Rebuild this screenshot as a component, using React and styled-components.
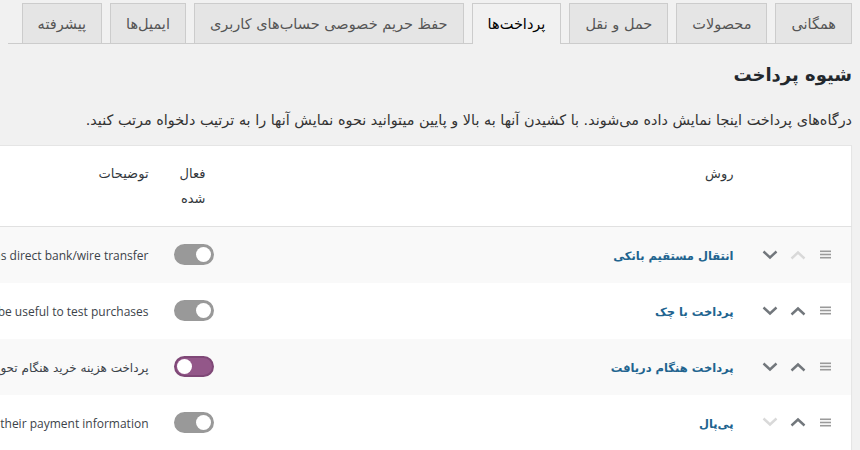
import styled, { createGlobalStyle } from "styled-components";

const GlobalStyle = createGlobalStyle`
  html, body {
    margin: 0;
    padding: 0;
    background: #f1f1f1;
  }
  body {
    direction: rtl;
    font-family: Tahoma, "DejaVu Sans", sans-serif;
    color: #444;
  }
`;

// rows of the payment gateways table
const gateways = [
  {
    name: "انتقال مستقیم بانکی",
    description: "Take payments in person via BACS. More commonly known as direct bank/wire transfer",
    enabled: false,
    canUp: false,
    canDown: true,
  },
  {
    name: "پرداخت با چک",
    description: "Take payments in person via checks. This offline gateway can also be useful to test purchases",
    enabled: false,
    canUp: true,
    canDown: true,
  },
  {
    name: "پرداخت هنگام دریافت",
    description: "پرداخت هزینه خرید هنگام تحویل سفارش",
    enabled: true,
    canUp: true,
    canDown: true,
    rtl: true,
  },
  {
    name: "پی‌پال",
    description: "PayPal Standard redirects customers to PayPal to enter their payment information",
    enabled: false,
    canUp: true,
    canDown: false,
  },
];

const tabs = [
  "همگانی",
  "محصولات",
  "حمل و نقل",
  "پرداخت‌ها",
  "حفظ حریم خصوصی حساب‌های کاربری",
  "ایمیل‌ها",
  "پیشرفته",
];

const Chevron = ({ up, disabled }) => (
  <ChevronIcon width="16" height="10" viewBox="0 0 16 10" $disabled={disabled}>
    <path
      d={up ? "M1.5 8.5 L8 2.5 L14.5 8.5" : "M1.5 1.5 L8 7.5 L14.5 1.5"}
      fill="none"
      stroke="currentColor"
      strokeWidth="2.4"
    />
  </ChevronIcon>
);

const Handle = () => (
  <HandleIcon width="11" height="9" viewBox="0 0 11 9">
    <rect x="0" y="0.5" width="11" height="1.6" fill="currentColor" />
    <rect x="0" y="3.7" width="11" height="1.6" fill="currentColor" />
    <rect x="0" y="6.9" width="11" height="1.6" fill="currentColor" />
  </HandleIcon>
);

const App = () => {
  return (
    <>
      <GlobalStyle />
      <Page>
        <TabBar>
          {tabs.map((tab) => (
            <Tab key={tab} $active={tab === "پرداخت‌ها"}>
              {tab}
            </Tab>
          ))}
        </TabBar>

        <Heading>شیوه پرداخت</Heading>
        <Intro>
          درگاه‌های پرداخت اینجا نمایش داده می‌شوند. با کشیدن آنها به بالا و پایین میتوانید نحوه نمایش آنها را به ترتیب دلخواه مرتب کنید.
        </Intro>

        <Table>
          <colgroup>
            <col style={{ width: 106 }} />
            <col style={{ width: 528 }} />
            <col style={{ width: 57 }} />
            <col />
          </colgroup>
          <thead>
            <tr>
              <Th />
              <Th>روش</Th>
              <Th>فعال شده</Th>
              <Th>توضیحات</Th>
            </tr>
          </thead>
          <tbody>
            {gateways.map((g, i) => (
              <Row key={g.name} $striped={i % 2 === 0}>
                <SortCell>
                  <SortControls>
                    <Handle />
                    <Chevron up disabled={!g.canUp} />
                    <Chevron disabled={!g.canDown} />
                  </SortControls>
                </SortCell>
                <NameCell>
                  <GatewayLink>{g.name}</GatewayLink>
                </NameCell>
                <ToggleCell>
                  <Toggle $on={g.enabled} />
                </ToggleCell>
                <DescCell>
                  <DescText dir={g.rtl ? "rtl" : "ltr"} $rtl={g.rtl}>
                    {g.description}
                  </DescText>
                </DescCell>
              </Row>
            ))}
          </tbody>
        </Table>
      </Page>
    </>
  );
};

const Page = styled.div`
  width: 860px;
  height: 450px;
  box-sizing: border-box;
  padding: 3px 8px 0 8px;
  overflow: hidden;
`;

const TabBar = styled.div`
  display: flex;
  gap: 8px;
  border-bottom: 1px solid #ccc;
  height: 40px;
`;

const Tab = styled.div`
  box-sizing: border-box;
  height: ${(p) => (p.$active ? "41px" : "40px")};
  padding: 0 15px;
  display: flex;
  align-items: center;
  border: 1px solid #ccc;
  border-bottom: none;
  background: ${(p) => (p.$active ? "#f1f1f1" : "#e5e5e5")};
  color: ${(p) => (p.$active ? "#000" : "#555")};
  font-size: 14.5px;
  white-space: nowrap;
`;

const Heading = styled.h2`
  margin: 17px 0 0;
  font-size: 18px;
  line-height: 28px;
  font-weight: 700;
  color: #23282d;
`;

const Intro = styled.p`
  margin: 21px 0 0;
  font-size: 14.4px;
  line-height: 20px;
  color: #333;
  white-space: nowrap;
`;

const Table = styled.table`
  width: 1150px;
  margin-top: 15px;
  table-layout: fixed;
  border-collapse: collapse;
  background: #fff;
  border: 1px solid #e5e5e5;
  box-shadow: 0 1px 1px rgba(0, 0, 0, 0.04);
`;

const Th = styled.th`
  height: 78px;
  box-sizing: border-box;
  padding: 15px 12px;
  vertical-align: top;
  text-align: right;
  font-weight: 400;
  font-size: 13px;
  line-height: 25px;
  color: #32373c;
  border-bottom: 1px solid #e1e1e1;
`;

const Row = styled.tr`
  height: 56px;
  background: ${(p) => (p.$striped ? "#f9f9f9" : "#fff")};
`;

const SortCell = styled.td`
  padding: 0 20px 0 0;
  vertical-align: middle;
`;

const SortControls = styled.div`
  display: flex;
  align-items: center;
  gap: 12px;
  color: #999;
`;

const HandleIcon = styled.svg`
  display: block;
  color: #9a9a9a;
  margin-left: 2px;
`;

const ChevronIcon = styled.svg`
  display: block;
  color: ${(p) => (p.$disabled ? "#d9d9d9" : "#72777c")};
`;

const NameCell = styled.td`
  padding: 0 12px;
  vertical-align: middle;
`;

const GatewayLink = styled.span`
  font-weight: 700;
  font-size: 11.5px;
  color: #21648f;
`;

const ToggleCell = styled.td`
  padding: 0 4px 0 0;
  vertical-align: middle;
`;

const Toggle = styled.span`
  display: block;
  position: relative;
  width: 40px;
  height: 21px;
  box-sizing: border-box;
  border-radius: 11px;
  background: ${(p) => (p.$on ? "#935789" : "#999")};
  border: 2px solid ${(p) => (p.$on ? "#7f4877" : "#999")};

  &::after {
    content: "";
    position: absolute;
    top: 1px;
    ${(p) => (p.$on ? "left: 1px;" : "right: 1px;")}
    width: 15px;
    height: 15px;
    border-radius: 50%;
    background: #fff;
  }
`;

const DescCell = styled.td`
  padding: 0 12px 0 0;
  vertical-align: middle;
  white-space: nowrap;
`;

const DescText = styled.span`
  font-family: ${(p) => (p.$rtl ? 'Tahoma, "DejaVu Sans", sans-serif' : '"Open Sans", "DejaVu Sans", sans-serif')};
  font-size: 12px;
  color: #3c434a;
  unicode-bidi: isolate;
`;

export default App;
